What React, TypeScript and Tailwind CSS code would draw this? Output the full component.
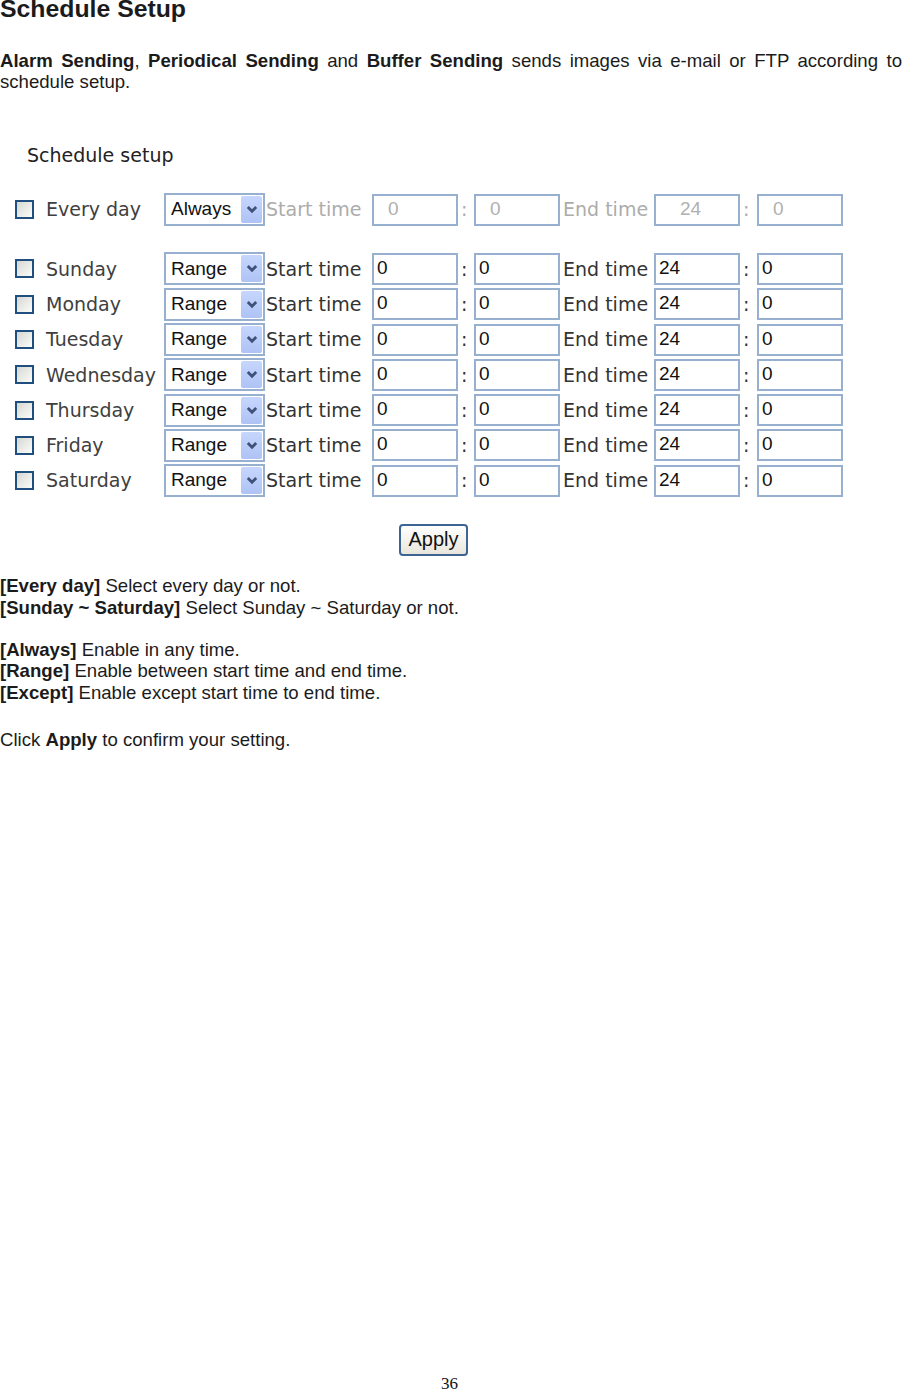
import { useState } from "react";

type DayRow = {
    name: string;
    mode: string;
    start: [string, string];
    end: [string, string];
};

const days: DayRow[] = ["Sunday", "Monday", "Tuesday", "Wednesday", "Thursday", "Friday", "Saturday"].map((name) => ({
    name,
    mode: "Range",
    start: ["0", "0"],
    end: ["24", "0"],
}));

const uiFont = { fontFamily: '"DejaVu Sans", Verdana, sans-serif' };
const arial = { fontFamily: '"Liberation Sans", Arial, sans-serif' };

function CheckBox() {
    const [checked, setChecked] = useState(false);
    return (
        <button
            onClick={() => setChecked(!checked)}
            className="w-[19px] h-[19px] border-2 border-[#1f4f7e] bg-gradient-to-br from-[#d8d8d2] to-[#fbfbfa] flex items-center justify-center text-[12px] leading-none text-[#21a121]"
        >
            {checked ? "✓" : null}
        </button>
    );
}

function Select({ value }: { value: string }) {
    return (
        <div className="w-[101px] h-[33px] border-2 border-[#98b0cf] bg-white flex items-center justify-between pl-[5px] pr-[1px]">
            <span style={arial} className="text-[19px] text-[#111]">
                {value}
            </span>
            <span className="w-[21px] h-[27px] rounded-[2px] bg-gradient-to-b from-[#c6d6fd] to-[#aec3f5] flex items-center justify-center">
                <svg width="12" height="9" viewBox="0 0 12 9">
                    <path d="M1.8 2 L6 6.2 L10.2 2" fill="none" stroke="#3e5178" strokeWidth="2.8" />
                </svg>
            </span>
        </div>
    );
}

function TimeBox({ value, disabled, pad }: { value: string; disabled?: boolean; pad?: string }) {
    return (
        <div
            style={arial}
            className={`w-[86px] h-[32px] border-2 border-[#98b0cf] bg-white flex items-start pt-[2px] text-[19px] leading-[22px] ${
                disabled ? "text-[#b0b0b0] " + pad : "text-[#111] pl-[3px]"
            }`}
        >
            {value}
        </div>
    );
}

function Row({ row, disabled }: { row: DayRow; disabled?: boolean }) {
    const label = disabled ? "text-[#acacac]" : "text-[#333]";
    return (
        <div style={uiFont} className="flex items-center h-[35.3px] text-[19px]">
            <div className="w-[149px] flex items-center">
                <CheckBox />
                <span className="ml-[12px] text-[#404040]">{row.name}</span>
            </div>
            <Select value={row.mode} />
            <span className={`w-[107px] pl-[1px] ${label}`}>Start time</span>
            <TimeBox value={row.start[0]} disabled={disabled} pad="pl-[14px]" />
            <span className={`w-[16px] pl-[3px] ${label}`}>:</span>
            <TimeBox value={row.start[1]} disabled={disabled} pad="pl-[14px]" />
            <span className={`w-[94px] pl-[3px] ${label}`}>End time</span>
            <TimeBox value={row.end[0]} disabled={disabled} pad="pl-[24px]" />
            <span className={`w-[17px] pl-[3px] ${label}`}>:</span>
            <TimeBox value={row.end[1]} disabled={disabled} pad="pl-[14px]" />
        </div>
    );
}

export default function App() {
    return (
        <div style={arial} className="h-[1390px] flex flex-col bg-white text-[#1b1b1b] overflow-hidden">
            <h1 className="text-[24.8px] leading-[28px] font-bold mt-[-5px]">Schedule Setup</h1>
            <p className="text-[18.6px] leading-[21px] text-justify mt-[27px]">
                <b>Alarm Sending</b>, <b>Periodical Sending</b> and <b>Buffer Sending</b> sends images via e-mail or FTP according to schedule setup.
            </p>

            <div className="pl-[15px] mt-[52px]">
                <div style={uiFont} className="text-[19px] leading-[22px] text-[#222] pl-[12px]">
                    Schedule setup
                </div>
                <div className="mt-[26px]">
                    <Row row={{ name: "Every day", mode: "Always", start: ["0", "0"], end: ["24", "0"] }} disabled />
                </div>
                <div className="mt-[24px]">
                    {days.map((d) => (
                        <Row key={d.name} row={d} />
                    ))}
                </div>
                <div className="flex mt-[26px]">
                    <button className="ml-[384px] w-[69px] h-[32px] rounded-[4px] border-2 border-[#3d6594] bg-gradient-to-b from-white to-[#e8e6dc] text-[20px] text-[#111] leading-none pb-[2px]">
                        Apply
                    </button>
                </div>
            </div>

            <div className="text-[18.6px] leading-[21.3px] mt-[19px]">
                <p>
                    <b>[Every day]</b> Select every day or not.
                </p>
                <p>
                    <b>[Sunday ~ Saturday]</b> Select Sunday ~ Saturday or not.
                </p>
                <p className="mt-[21px]">
                    <b>[Always]</b> Enable in any time.
                </p>
                <p>
                    <b>[Range]</b> Enable between start time and end time.
                </p>
                <p>
                    <b>[Except]</b> Enable except start time to end time.
                </p>
                <p className="mt-[26px]">
                    Click <b>Apply</b> to confirm your setting.
                </p>
            </div>

            <div style={{ fontFamily: '"Liberation Serif", "Times New Roman", serif' }} className="mt-auto mb-[-3px] text-center text-[17px] leading-[19px] text-[#111] pr-[3px]">
                36
            </div>
        </div>
    );
}
